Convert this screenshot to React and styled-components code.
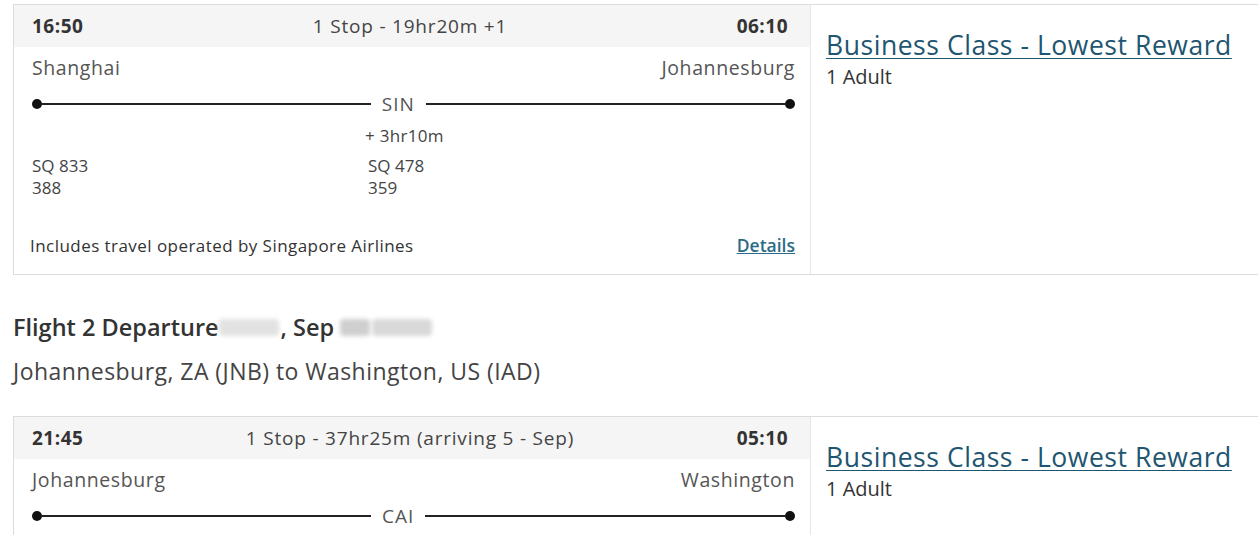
import React from "react";
import styled, { createGlobalStyle } from "styled-components";

const GlobalStyle = createGlobalStyle`
  body {
    margin: 0;
    background: #fff;
    font-family: "Open Sans", "Liberation Sans", sans-serif;
    color: #333;
    overflow: hidden;
  }
`;

const flights = [
  {
    depart: "16:50",
    summary: "1 Stop - 19hr20m +1",
    arrive: "06:10",
    from: "Shanghai",
    to: "Johannesburg",
    stop: "SIN",
    layover: "+ 3hr10m",
    legs: [
      { number: "SQ 833", aircraft: "388" },
      { number: "SQ 478", aircraft: "359" },
    ],
    operator: "Includes travel operated by Singapore Airlines",
  },
  {
    depart: "21:45",
    summary: "1 Stop - 37hr25m (arriving 5 - Sep)",
    arrive: "05:10",
    from: "Johannesburg",
    to: "Washington",
    stop: "CAI",
  },
];

function FlightCard({ flight }) {
  return (
    <Card>
      <Itinerary>
        <TimeBar>
          <Time>{flight.depart}</Time>
          <Summary>{flight.summary}</Summary>
          <Time $right>{flight.arrive}</Time>
        </TimeBar>
        <Body>
          <Cities>
            <City>{flight.from}</City>
            <City>{flight.to}</City>
          </Cities>
          <Route>
            <Dot />
            <Line $grow={0.915} />
            <StopCode>{flight.stop}</StopCode>
            <Line $grow={1} />
            <Dot />
          </Route>
          {flight.layover && <Layover>{flight.layover}</Layover>}
          {flight.legs && (
            <Legs>
              {flight.legs.map((leg) => (
                <Leg key={leg.number}>
                  <span>{leg.number}</span>
                  <span>{leg.aircraft}</span>
                </Leg>
              ))}
            </Legs>
          )}
          {flight.operator && (
            <Footer>
              <Operator>{flight.operator}</Operator>
              <DetailsLink href="#">Details</DetailsLink>
            </Footer>
          )}
        </Body>
      </Itinerary>
      <Fare>
        <FareLink href="#">Business Class - Lowest Reward</FareLink>
        <Passengers>1 Adult</Passengers>
      </Fare>
    </Card>
  );
}

export default function App() {
  return (
    <Page>
      <GlobalStyle />
      <FlightCard flight={flights[0]} />
      <Heading>
        Flight 2 Departure<Redacted $w={60} />, Sep{" "}
        <Redacted $w={30} $tone="#cfcfcf" />
        <Redacted $w={60} $tone="#d9d9d9" />
      </Heading>
      <RouteTitle>Johannesburg, ZA (JNB) to Washington, US (IAD)</RouteTitle>
      <FlightCard flight={flights[1]} />
    </Page>
  );
}

const Page = styled.div`
  padding: 4px 0 0 13px;
  width: 1260px;
`;

const Card = styled.div`
  display: flex;
  border: 1px solid #dcdcdc;
  border-right: none;
  background: #fff;
`;

const Itinerary = styled.div`
  width: 796px;
  min-height: 269px;
  border-right: 1px solid #e6e6e6;
`;

const TimeBar = styled.div`
  display: grid;
  grid-template-columns: 1fr auto 1fr;
  align-items: center;
  height: 42px;
  padding: 0 22px 0 18px;
  background: #f5f5f5;
`;

const Time = styled.div`
  font-size: 19px;
  letter-spacing: 0.5px;
  font-weight: 700;
  color: #333;
  justify-self: ${(p) => (p.$right ? "end" : "start")};
`;

const Summary = styled.div`
  font-size: 19px;
  letter-spacing: 0.8px;
  color: #444;
`;

const Body = styled.div`
  padding: 7px 15px 0 18px;
`;

const Cities = styled.div`
  display: flex;
  justify-content: space-between;
  font-size: 19.5px;
  letter-spacing: 0.6px;
  color: #555;
  line-height: 28px;
`;

const City = styled.span``;

const Route = styled.div`
  display: flex;
  align-items: center;
  height: 28px;
  margin-top: 8px;
`;

const Dot = styled.span`
  width: 10px;
  height: 10px;
  border-radius: 50%;
  background: #111;
  flex-shrink: 0;
`;

const Line = styled.span`
  flex: ${(p) => p.$grow};
  height: 2px;
  background: #222;
`;

const StopCode = styled.span`
  font-size: 19px;
  letter-spacing: 1px;
  color: #555;
  padding: 0 11px;
`;

const Layover = styled.div`
  font-size: 17px;
  letter-spacing: 0.3px;
  color: #444;
  text-align: center;
  padding-right: 18px;
  margin-top: 6px;
  line-height: 24px;
`;

const Legs = styled.div`
  display: grid;
  grid-template-columns: 336px 1fr;
  margin-top: 7px;
`;

const Leg = styled.div`
  display: flex;
  flex-direction: column;
  font-size: 17px;
  line-height: 22px;
  color: #444;
`;

const Footer = styled.div`
  display: flex;
  justify-content: space-between;
  align-items: center;
  margin-top: 31px;
  height: 30px;
  margin-bottom: 14px;
`;

const Operator = styled.span`
  font-size: 17px;
  letter-spacing: 0.45px;
  color: #333;
  margin-left: -2px;
`;

const DetailsLink = styled.a`
  font-size: 17.5px;
  font-weight: 600;
  color: #2c6b85;
  text-decoration: underline;
`;

const Fare = styled.div`
  flex: 1;
  display: flex;
  flex-direction: column;
  padding: 23px 0 0 15px;
`;

const FareLink = styled.a`
  font-size: 26.5px;
  letter-spacing: 0.55px;
  color: #1e5570;
  text-decoration: underline;
  text-decoration-thickness: 1px;
  text-underline-offset: 3px;
  line-height: 34px;
`;

const Passengers = styled.div`
  font-size: 20px;
  color: #333;
  line-height: 30px;
`;

const Heading = styled.h2`
  margin: 36px 0 0 0;
  font-size: 23.5px;
  font-weight: 600;
  color: #333;
  line-height: 32px;
`;

const Redacted = styled.span`
  display: inline-block;
  vertical-align: middle;
  width: ${(p) => p.$w}px;
  height: 17px;
  margin-top: -4px;
  margin-right: 2px;
  background: ${(p) => p.$tone || "#e2e2e2"};
  border-radius: 4px;
  filter: blur(2px);
`;

const RouteTitle = styled.div`
  font-size: 23px;
  letter-spacing: 0.45px;
  color: #444;
  margin-top: 12px;
  line-height: 32px;
  margin-bottom: 29px;
`;
